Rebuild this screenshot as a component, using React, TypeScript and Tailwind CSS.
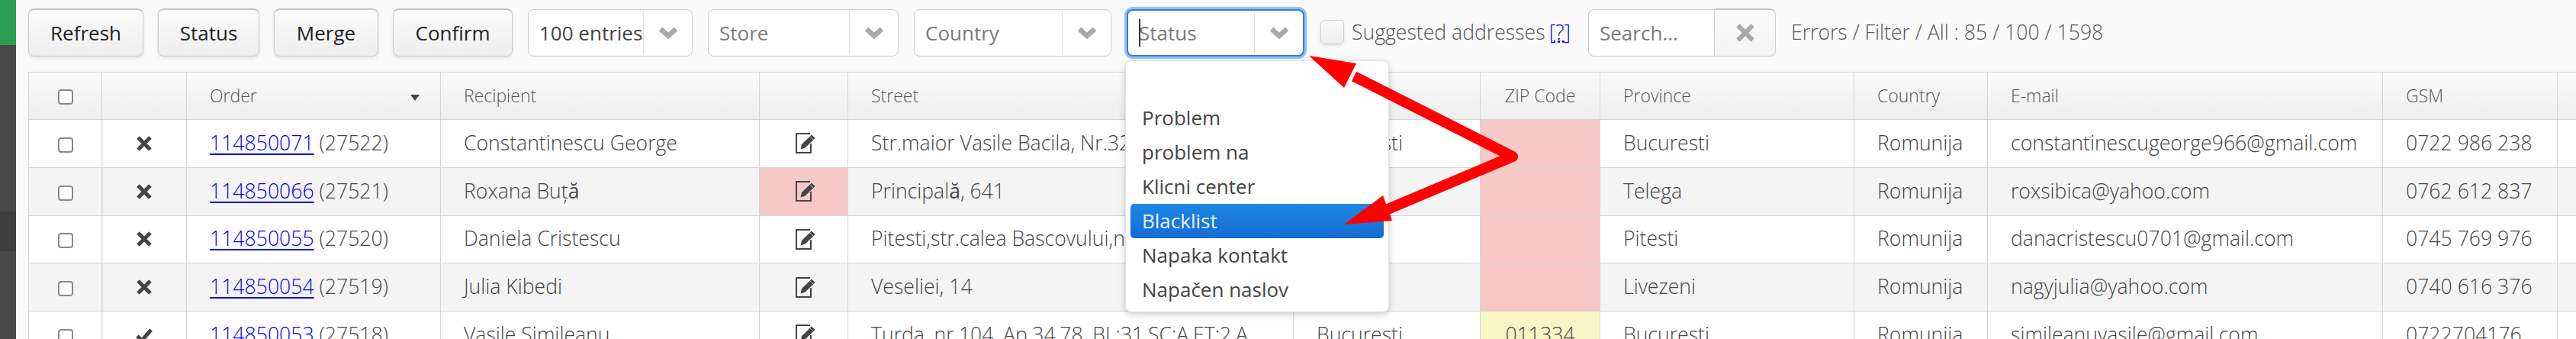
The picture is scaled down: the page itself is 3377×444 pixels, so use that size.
import React from 'react';

const Chevron = () => (
  <svg width="26" height="18" viewBox="0 0 26 18" fill="none" className="text-[#a9a9a9]">
    <polyline points="3,4 13,13 23,4" stroke="currentColor" strokeWidth="6.5" />
  </svg>
);

const Cross = ({ size = 20, color = '#444' }: { size?: number; color?: string }) => (
  <svg width={size} height={size} viewBox="0 0 20 20" fill="none">
    <path d="M2 2 L18 18 M18 2 L2 18" stroke={color} strokeWidth="5" />
  </svg>
);

const Check = () => (
  <svg width="22" height="20" viewBox="0 0 22 20" fill="none">
    <path d="M2 11 L8 17 L20 3" stroke="#444" strokeWidth="5" />
  </svg>
);

const EditIcon = () => (
  <svg width="27" height="27" viewBox="0 0 27 27" fill="none">
    <path d="M19 1 H1 V26 H20 V14" stroke="#444" strokeWidth="2" />
    <path d="M8 15 L21 2.5 L25.5 7 L12.5 19.5 L6.5 21.5 Z" fill="#444" />
    <path d="M19 5 L23 9" stroke="#fff" strokeWidth="1" opacity="0.6" />
  </svg>
);

const Box = () => (
  <span className="inline-block w-[20px] h-[20px] rounded-[4px] border-2 border-[#8a8a8a] bg-white align-middle" />
);

const Select = ({ label, width, dark, focus }: { label: string; width: string; dark?: boolean; focus?: boolean }) => (
  <div
    className={`${width} h-[62px] mt-[1px] flex rounded-[8px] bg-white ${
      focus ? 'border-2 border-[#2a80e0] shadow-[0_0_0_3px_#93c2f2]' : 'border border-[#cccccc]'
    }`}
  >
    <div className={`flex-1 min-w-0 flex items-center pl-[14px] whitespace-nowrap ${dark ? 'text-[#444]' : 'text-[#7a7a7a]'}`}>
      {label}
    </div>
    <div className="w-[64px] my-[2px] border-l border-[#e2e2e2] flex items-center justify-center">
      <Chevron />
    </div>
  </div>
);

const Btn = ({ label, width }: { label: string; width: string }) => (
  <button className={`${width} h-[63px] rounded-[8px] border border-[#cccccc] border-t-[2px] border-t-[#c6c6c6] bg-gradient-to-b from-[#fbfbfb] to-[#eeeeee] text-[#222] shadow-[0_2px_4px_rgba(0,0,0,0.1)]`}>
    {label}
  </button>
);

type Row = {
  ok: boolean;
  order: string;
  num: string;
  name: React.ReactNode;
  editRed?: boolean;
  street: React.ReactNode;
  city: string;
  zip: string;
  zipBad: boolean;
  province: string;
  email: string;
  gsm: string;
};

const rows: Row[] = [
  { ok: false, order: '114850071', num: '(27522)', name: 'Constantinescu George', street: 'Str.maior Vasile Bacila, Nr.32', city: 'Bucuresti', zip: '', zipBad: true, province: 'Bucuresti', email: 'constantinescugeorge966@gmail.com', gsm: '0722 986 238' },
  { ok: false, order: '114850066', num: '(27521)', name: <>Roxana Buț<span className="font-normal">ă</span></>, editRed: true, street: <>Principal<span className="font-normal">ă</span>, 641</>, city: 'Telega', zip: '', zipBad: true, province: 'Telega', email: 'roxsibica@yahoo.com', gsm: '0762 612 837' },
  { ok: false, order: '114850055', num: '(27520)', name: 'Daniela Cristescu', street: 'Pitesti,str.calea Bascovului,nr', city: 'Pitesti', zip: '', zipBad: true, province: 'Pitesti', email: 'danacristescu0701@gmail.com', gsm: '0745 769 976' },
  { ok: false, order: '114850054', num: '(27519)', name: 'Julia Kibedi', street: 'Veseliei, 14', city: 'Livezeni', zip: '', zipBad: true, province: 'Livezeni', email: 'nagyjulia@yahoo.com', gsm: '0740 616 376' },
  { ok: true, order: '114850053', num: '(27518)', name: 'Vasile Simileanu', street: 'Turda, nr.104, Ap.34,78, BL:31,SC:A,ET:2,A', city: 'Bucuresti', zip: '011334', zipBad: false, province: 'Bucuresti', email: 'simileanuvasile@gmail.com', gsm: '0722704176' },
];

const th = 'border border-[#d6d6d6] px-[30px] font-light text-[23px] text-left text-[#555]';
const td = 'border border-[#d6d6d6] px-[30px] whitespace-nowrap overflow-hidden';

export default function App() {
  return (
    <div className="relative h-[444px] w-full overflow-hidden flex bg-[#fafafa] font-['Open_Sans',sans-serif] text-[26px] text-[#444]">
      <div className="w-[21px] shrink-0 flex flex-col">
        <div className="h-[59px] bg-[#2a9d4f]" />
        <div className="h-[218px] bg-[#484848]" />
        <div className="h-[52px] bg-[#3e3e3e]" />
        <div className="flex-1 bg-[#484848]" />
      </div>

      <div className="flex-1 min-w-0 pl-[16px] pt-[11px]">
        {/* toolbar */}
        <div className="flex items-start h-[83px] whitespace-nowrap">
          <div className="flex gap-[19px]">
            <Btn label="Refresh" width="w-[151px]" />
            <Btn label="Status" width="w-[133px]" />
            <Btn label="Merge" width="w-[137px]" />
            <Btn label="Confirm" width="w-[157px]" />
          </div>
          <div className="flex gap-[20px] ml-[20px]">
            <Select label="100 entries" width="w-[216px]" dark />
            <Select label="Store" width="w-[250px]" />
            <Select label="Country" width="w-[259px]" />
            <div className="relative">
              <Select label="Status" width="w-[233px]" focus />
              <span className="absolute left-[16px] top-[14px] h-[36px] w-[2px] bg-[#333]" />
              {/* status dropdown */}
              <div className="absolute left-[-2px] top-[68px] z-10 w-[346px] h-[330px] rounded-[8px] bg-white border border-[#e2e2e2] shadow-[0_3px_10px_rgba(0,0,0,0.2)] pt-[7px] px-[6px] text-[#444]">
                {['', 'Problem', 'problem na', 'Klicni center', 'Blacklist', 'Napaka kontakt', 'Napačen naslov'].map((item, i) => (
                  <div
                    key={i}
                    className={`h-[45px] leading-[45px] pl-[15px] rounded-[5px] ${
                      item === 'Blacklist' ? 'bg-gradient-to-b from-[#1d88e5] to-[#166bd3] text-[#e9f2fc]' : ''
                    }`}
                  >
                    {item}
                  </div>
                ))}
              </div>
            </div>
          </div>
          <div className="w-[328px] flex items-center justify-between h-[63px] ml-[21px] font-light text-[26.6px] text-[#555]">
            <span className="flex items-center">
              <span className="w-[31px] h-[32px] rounded-[6px] border border-[#cccccc] bg-gradient-to-b from-[#fbfbfb] to-[#eeeeee] shadow-[0_2px_4px_rgba(0,0,0,0.1)]" />
              <span className="ml-[10px]">Suggested addresses</span>
            </span>
            <span className="text-[#0000ee] underline decoration-dotted">[?]</span>
          </div>
          <div className="ml-[23px] w-[246px] h-[63px] flex">
            <div className="w-[165px] h-[62px] mt-[1px] flex items-center pl-[14px] rounded-l-[8px] border border-[#cccccc] border-r-0 bg-white text-[#7a7a7a]">
              Search...
            </div>
            <div className="flex-1 flex items-center justify-center rounded-r-[8px] border border-[#cccccc] border-t-[2px] border-t-[#c6c6c6] bg-gradient-to-b from-[#fbfbfb] to-[#f4f4f4]">
              <Cross size={24} color="#a9a9a9" />
            </div>
          </div>
          <div className="ml-[20px] h-[63px] flex items-center font-light text-[26.6px] text-[#555]">
            Errors / Filter / All : 85 / 100 / 1598
          </div>
        </div>

        {/* orders table */}
        <table className="table-fixed border-collapse w-[3355px] font-light text-[26.6px]">
          <colgroup>
            <col className="w-[96px]" />
            <col className="w-[111px]" />
            <col className="w-[333px]" />
            <col className="w-[418px]" />
            <col className="w-[116px]" />
            <col className="w-[584px]" />
            <col className="w-[245px]" />
            <col className="w-[157px]" />
            <col className="w-[333px]" />
            <col className="w-[175px]" />
            <col className="w-[518px]" />
            <col className="w-[229px]" />
            <col className="w-[40px]" />
          </colgroup>
          <thead>
            <tr className="h-[62px] bg-gradient-to-b from-[#fafafa] to-[#eeeeee]">
              <th className="border border-[#d6d6d6] text-center"><Box /></th>
              <th className={th} />
              <th className={th}>
                <div className="flex items-center justify-between">
                  Order
                  <span className="mr-[-3px] mt-[4px] border-x-[6px] border-x-transparent border-t-[8px] border-t-[#444]" />
                </div>
              </th>
              <th className={th}>Recipient</th>
              <th className={th} />
              <th className={th}>Street</th>
              <th className={th}>City</th>
              <th className={`${th} !px-0 !text-center`}>ZIP Code</th>
              <th className={th}>Province</th>
              <th className={th}>Country</th>
              <th className={th}>E-mail</th>
              <th className={th}>GSM</th>
              <th className={th} />
            </tr>
          </thead>
          <tbody>
            {rows.map((r, i) => (
              <tr key={r.order} className={`h-[62.75px] ${i % 2 === 1 ? 'bg-[#f4f4f4]' : 'bg-white'}`}>
                <td className="border border-[#d6d6d6] text-center"><Box /></td>
                <td className="border border-[#d6d6d6] shadow-[inset_3px_0_3px_-2px_rgba(0,0,0,0.08)]">
                  <div className="flex justify-center">{r.ok ? <Check /> : <Cross />}</div>
                </td>
                <td className={td}>
                  <a className="text-[#0000ee] underline decoration-2 underline-offset-[4px]">{r.order}</a> {r.num}
                </td>
                <td className={td}>{r.name}</td>
                <td className={`border border-[#d6d6d6] ${r.editRed ? 'bg-[#f6c9c7]' : ''}`}>
                  <div className="flex justify-center pl-[6px]"><EditIcon /></div>
                </td>
                <td className={td}>{r.street}</td>
                <td className={td}>{r.city}</td>
                <td className={`border border-[#d6d6d6] text-center ${r.zipBad ? 'bg-[#f6c9c7]' : 'bg-[#f6f5c3]'}`}>{r.zip}</td>
                <td className={td}>{r.province}</td>
                <td className={td}>Romunija</td>
                <td className={td}>{r.email}</td>
                <td className={td}>{r.gsm}</td>
                <td className="border border-[#d6d6d6]" />
              </tr>
            ))}
          </tbody>
        </table>
      </div>

      {/* red annotation arrows */}
      <svg className="absolute inset-0 z-20 pointer-events-none" width="3377" height="444" viewBox="0 0 3377 444" fill="none">
        <polyline points="1775,100 1983,205 1805,280" stroke="#ff0000" strokeWidth="14" strokeLinejoin="round" />
        <polygon points="1716,73 1778,83 1762,115" fill="#ff0000" />
        <polygon points="1762,294 1813,256 1825,289" fill="#ff0000" />
      </svg>
    </div>
  );
}
